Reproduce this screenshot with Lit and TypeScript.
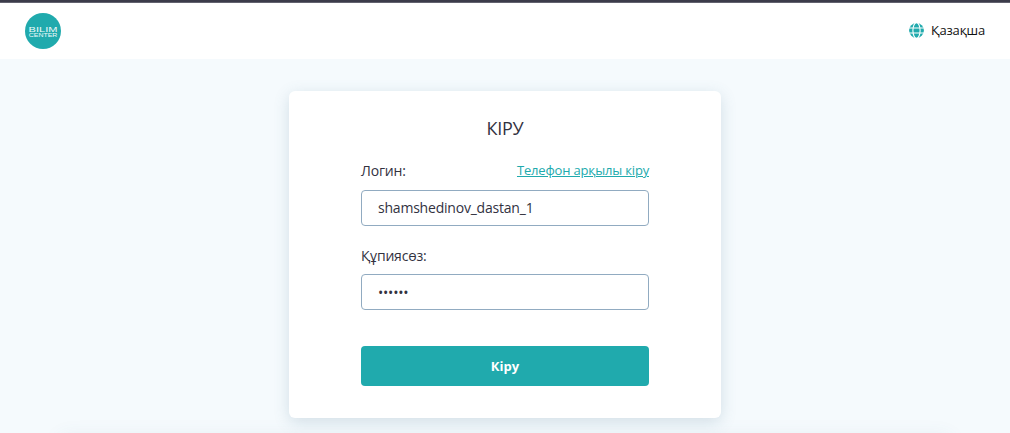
import { LitElement, html, css } from "lit";
import { customElement, state } from "lit/decorators.js";

@customElement("app-root")
export class AppRoot extends LitElement {
  @state() private login = "shamshedinov_dastan_1";
  @state() private password = "123456";

  static styles = css`
    :host {
      display: flex;
      flex-direction: column;
      height: 433px;
      overflow: hidden;
      box-sizing: border-box;
      background: #f5fafd;
      color: #32323f;
      font: 14px/20px "Open Sans", "Noto Sans", sans-serif;
      letter-spacing: -0.18px;
    }
    * {
      box-sizing: border-box;
    }
    .header {
      flex: none;
      display: flex;
      align-items: center;
      justify-content: space-between;
      height: 59px;
      padding: 3px 25px 0 25px;
      background: linear-gradient(#3c3c4a 0 2px, #62626f 2px 3px, #fff 3px);
    }
    .logo {
      display: block;
      width: 36px;
      height: 36px;
      letter-spacing: 0;
    }
    .lang {
      display: flex;
      align-items: center;
      gap: 7px;
      padding-bottom: 1px;
      color: #111;
      font-size: 13px;
    }
    .lang span {
      padding-bottom: 1px;
    }
    .globe {
      display: block;
      width: 15px;
      height: 15px;
    }
    .main {
      flex: none;
      display: flex;
      justify-content: center;
      padding: 32px 0 15px;
    }
    .card {
      display: flex;
      flex-direction: column;
      width: 432px;
      height: 327px;
      padding: 25px 72px 32px;
      background: #fff;
      border-radius: 6px;
      box-shadow: 0 4px 16px rgba(72, 113, 140, 0.2);
    }
    .title {
      margin: 0 0 20px;
      font-size: 18px;
      line-height: 25px;
      font-weight: 400;
      letter-spacing: -0.25px;
      text-align: center;
    }
    .row {
      display: flex;
      justify-content: space-between;
      height: 20px;
      margin-bottom: 9px;
    }
    .link {
      color: #20aaad;
      font-size: 13px;
      line-height: 19px;
      text-decoration: underline;
    }
    .input {
      display: block;
      width: 100%;
      height: 36px;
      padding: 0 16px;
      border: 1px solid #91abc1;
      border-radius: 4px;
      outline: none;
      background: #fff;
      color: inherit;
      font: inherit;
      letter-spacing: -0.21px;
    }
    .name {
      padding-bottom: 2px;
    }
    .second {
      margin: 20px 0 8px;
    }
    .button {
      height: 40px;
      margin-top: 36px;
      border: 0;
      border-radius: 4px;
      background: #20aaad;
      color: #fff;
      font: 700 13px/20px "Open Sans", "Noto Sans", sans-serif;
    }
    .footer {
      flex: none;
      height: 60px;
      margin: 0 60px;
      background: #fff;
      box-shadow: 0 4px 20px rgba(72, 113, 140, 0.09);
    }
  `;

  render() {
    return html`
      <header class="header">
        <svg class="logo" viewBox="0 0 36 36">
          <circle cx="18" cy="18" r="18" fill="#20aaad" />
          <g fill="#effafa" font-family="Liberation Sans, sans-serif">
            <text x="3.6" y="18.6" font-size="7.8" textLength="28.8" lengthAdjust="spacingAndGlyphs">BILIM</text>
            <text x="3.8" y="24" font-size="5.6" textLength="28.6" lengthAdjust="spacingAndGlyphs">CENTER</text>
          </g>
        </svg>
        <div class="lang">
          <svg class="globe" viewBox="0 0 15 15">
            <circle cx="7.5" cy="7.5" r="7.4" fill="#20aaad" />
            <g fill="none" stroke="#fff" stroke-width="1.1">
              <ellipse cx="7.5" cy="7.5" rx="3.6" ry="7.9" />
              <path d="M0 5h15M0 10h15" />
            </g>
          </svg>
          <span>Қазақша</span>
        </div>
      </header>
      <main class="main">
        <form class="card" @submit=${(e: Event) => e.preventDefault()}>
          <h1 class="title">КІРУ</h1>
          <div class="row">
            <label for="login">Логин:</label>
            <a class="link">Телефон арқылы кіру</a>
          </div>
          <input class="input name" id="login" .value=${this.login} />
          <label class="second" for="password">Құпиясөз:</label>
          <input class="input" id="password" type="password" .value=${this.password} />
          <button class="button">Кіру</button>
        </form>
      </main>
      <footer class="footer"></footer>
    `;
  }
}
